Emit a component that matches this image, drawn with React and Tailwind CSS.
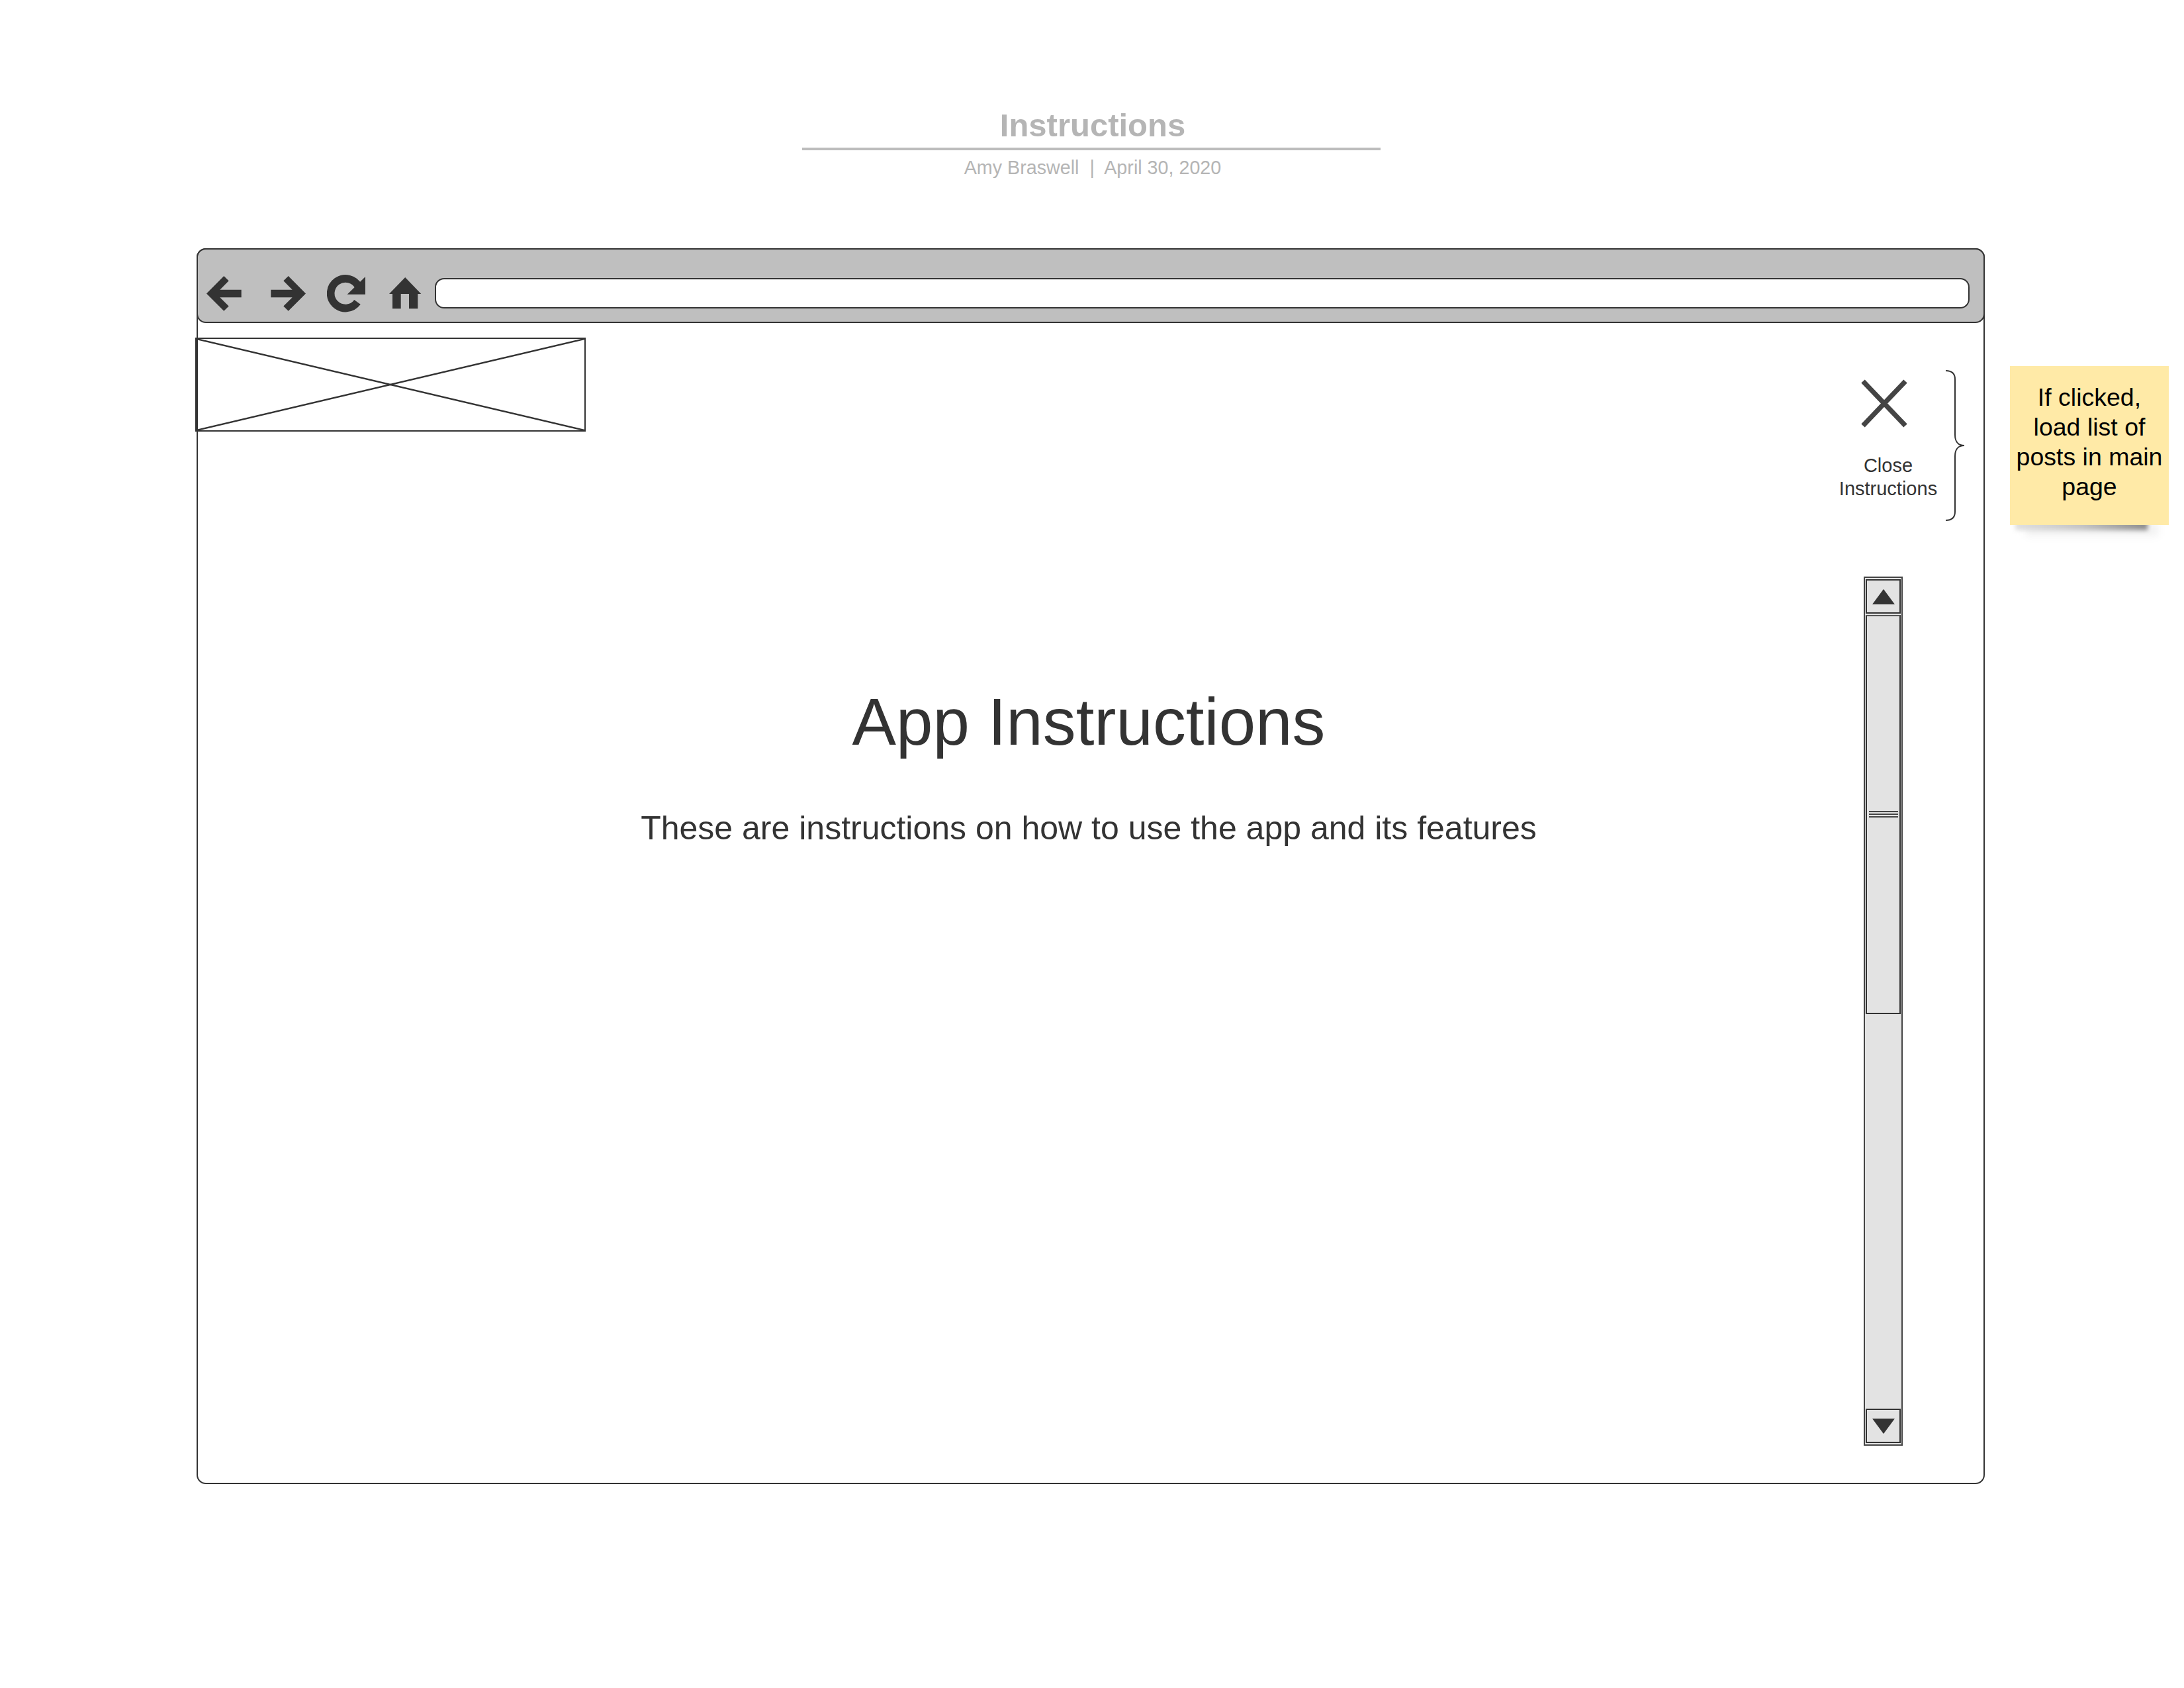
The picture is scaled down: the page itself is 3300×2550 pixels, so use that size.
const dark = "#333333";

function BackIcon({ flip }) {
  return (
    <svg width="53" height="53" viewBox="0 0 53 53" className={flip ? "-scale-x-100" : ""}>
      <polygon fill={dark} points="0,26.4 26.3,0 33.7,7.3 20.3,20.7 52.7,20.7 52.7,32.3 20.3,32.3 33.7,45.4 26.3,52.7" />
    </svg>
  );
}

function ReloadIcon() {
  return (
    <svg width="58" height="57" viewBox="0 0 58 57">
      <path d="M46 41.4 A22.3 22.3 0 1 1 48 18.4" fill="none" stroke={dark} strokeWidth="11.7" />
      <polygon fill={dark} points="58,3 58,29.7 30.7,29.7" />
    </svg>
  );
}

function HomeIcon() {
  return (
    <svg width="49" height="48" viewBox="0 0 49 48">
      <path fill={dark} d="M24.2 0 L48.3 25 L43.3 25 L43.3 47.3 L30 47.3 L30 25 L17.7 25 L17.7 47.3 L5 47.3 L5 25 L0 25 Z" />
    </svg>
  );
}

function Brace() {
  return (
    <svg width="29" height="228" viewBox="0 0 29 228" className="block shrink-0">
      <path d="M0 1 C9 1 14 5 14 14 L14 98 C14 108 19 114 28 114 C19 114 14 120 14 130 L14 214 C14 223 9 227 0 227" fill="none" stroke={dark} strokeWidth="2" />
    </svg>
  );
}

function ScrollButton({ up }) {
  return (
    <div className="h-[52px] border-2 border-[#333333] bg-[#e3e3e3] flex items-center justify-center">
      <svg width="34" height="23" viewBox="0 0 34 23">
        <polygon fill={dark} points={up ? "17,0 34,23 0,23" : "0,0 34,0 17,23"} />
      </svg>
    </div>
  );
}

function Scrollbar() {
  return (
    <div className="w-[59px] h-[1313px] border-2 border-[#444444] bg-[#e3e3e3] flex flex-col px-[1px] py-[2px]">
      <div className="flex-1 flex flex-col">
        <ScrollButton up />
        <div className="mt-[2px] h-[603px] border-2 border-[#333333] border-t-[#555555] flex flex-col items-center pt-[294px] gap-[2px]">
          <div className="w-[44px] h-[2px] bg-[#444444]" />
          <div className="w-[44px] h-[2px] bg-[#444444]" />
          <div className="w-[44px] h-[2px] bg-[#444444]" />
        </div>
        <div className="flex-1" />
        <ScrollButton />
      </div>
    </div>
  );
}

export default function App() {
  return (
    <div className="w-[3300px] h-[2550px] bg-white overflow-hidden font-['Liberation_Sans',Arial,sans-serif]">
      <header className="flex flex-col items-center pl-[2px] pt-[162px] h-[375px]">
        <h1 className="text-[49px] leading-[55px] font-bold text-[#b5b5b5]">Instructions</h1>
        <div className="w-[874px] h-[4px] bg-[#bdbdbd] mt-[6px] -ml-[4px]" />
        <p className="text-[28.7px] leading-[34px] mt-[9px] text-[#b5b5b5] whitespace-pre">Amy Braswell  |  April 30, 2020</p>
      </header>

      <div className="flex items-start pl-[297px]">
        <div className="w-[2702px] h-[1867px] border-2 border-[#333333] rounded-[14px] flex flex-col">
          <div className="h-[113px] shrink-0 -mx-[2px] -mt-[2px] bg-[#bfbfbf] border-2 border-[#333333] rounded-[14px] flex items-center pl-[13px] pt-[23px] pr-[21px]">
            <BackIcon />
            <div className="ml-[44px]"><BackIcon flip /></div>
            <div className="ml-[32px]"><ReloadIcon /></div>
            <div className="ml-[36px]"><HomeIcon /></div>
            <div className="ml-[20px] flex-1 h-[46px] bg-white border-2 border-[#333333] rounded-[14px]" />
          </div>

          <div className="flex-1 flex">
            <div className="flex-1 flex flex-col pt-[22px]">
              <svg width="590" height="142" viewBox="0 0 590 142" preserveAspectRatio="none" className="block -ml-[4px] border-2 border-[#333333] box-border">
                <path d="M0 0 L590 142 M590 0 L0 142" stroke={dark} strokeWidth="2.4" fill="none" vectorEffect="non-scaling-stroke" />
              </svg>
              <h2 className="mt-[381px] pl-[175px] text-center text-[99.7px] leading-[115px] text-[#333333]">App Instructions</h2>
              <p className="mt-[74px] pl-[175px] text-center text-[50px] leading-[58px] text-[#333333]">These are instructions on how to use the app and its features</p>
            </div>

            <div className="w-[181px] shrink-0 flex flex-col pt-[71px]">
              <div className="flex items-start">
                <div className="w-[74px] mr-[50px] shrink-0 flex flex-col items-center">
                  <svg width="70" height="73" viewBox="0 0 70 73" className="mt-[14px] -ml-[12px] block shrink-0">
                    <path d="M3 3 L67 70 M67 3 L3 70" stroke="#444444" strokeWidth="7.5" fill="none" />
                  </svg>
                  <p className="mt-[40px] w-[180px] shrink-0 text-center text-[29px] leading-[35px] text-[#333333]">Close<br />Instructions</p>
                </div>
                <Brace />
              </div>
              <div className="mt-[84px]"><Scrollbar /></div>
            </div>
          </div>
        </div>

        <aside className="relative ml-[38px] mt-[178px] w-[240px] h-[240px]">
          <div className="absolute left-[24px] top-[235px] w-[200px] h-[22px] bg-[#000000]/5 blur-[6px]" />
          <div className="absolute left-[8px] top-[234px] w-[200px] h-[14px] bg-gradient-to-r from-[#e0e0e0] via-[#c4c4c4] to-[#8c8c8c] blur-[3px]" />
          <div className="relative w-full h-full bg-[#ffeaa7] flex items-center justify-center text-center text-[37.5px] leading-[45px] text-black">
            <span className="-mt-[10px]">If clicked,<br />load list of<br />posts in main<br />page</span>
          </div>
        </aside>
      </div>
    </div>
  );
}
